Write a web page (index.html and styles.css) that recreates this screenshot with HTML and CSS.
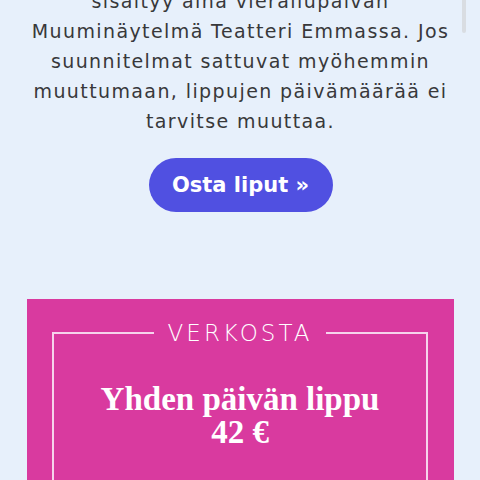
FILE: index.html
```html
<!DOCTYPE html>
<html lang="fi">
<head>
<meta charset="utf-8">
<title>Liput</title>
<link rel="stylesheet" href="styles.css">
</head>
<body>
<div class="scroll-thumb"></div>
<main class="page">
  <section class="intro">
    <p class="intro-text">sisältyy aina vierailupäivän<br>Muuminäytelmä Teatteri Emmassa. Jos<br>suunnitelmat sattuvat myöhemmin<br>muuttumaan, lippujen päivämäärää ei<br>tarvitse muuttaa.</p>
    <a class="buy-btn" href="#">Osta liput »</a>
  </section>
  <section class="ticket">
    <fieldset class="ticket-frame">
      <legend class="ticket-label">VERKOSTA</legend>
      <h2 class="ticket-title">Yhden päivän lippu<br>42 €</h2>
    </fieldset>
  </section>
</main>
</body>
</html>
```
FILE: styles.css
```css
html, body {
  margin: 0;
  padding: 0;
}
body {
  background: #e7f0fb;
  font-family: "DejaVu Sans", "Open Sans", sans-serif;
  color: #38383a;
  overflow: hidden;
  height: 480px;
}
.scroll-thumb {
  position: absolute;
  top: 0;
  left: 462px;
  width: 4px;
  height: 33px;
  border-radius: 0 0 3px 3px;
  background: #d9dde2;
}
.page {
  padding: 0 26px 0 27px;
}
.intro {
  display: flex;
  flex-direction: column;
  align-items: center;
}
.intro-text {
  margin: -14px -20px 0;
  font-size: 19px;
  line-height: 30px;
  letter-spacing: 1.4px;
  text-align: center;
}
.buy-btn {
  margin-top: 22px;
  display: flex;
  align-items: center;
  justify-content: center;
  width: 184px;
  height: 54px;
  border-radius: 27px;
  background: #5050e1;
  color: #ffffff;
  text-decoration: none;
  font-weight: bold;
  font-size: 21px;
}
.ticket {
  margin-top: 87px;
  background: #d93a9f;
  padding: 21px 26px 40px 25px;
}
.ticket-frame {
  margin: 0;
  border: 2px solid #f6d3ec;
  border-bottom: none;
  padding: 0 0 40px;
  text-align: center;
}
.ticket-label {
  margin: 0 auto;
  padding: 0 14px;
  font-size: 23px;
  font-weight: 300;
  letter-spacing: 3px;
  line-height: 26px;
  color: #ffffff;
}
.ticket-title {
  margin: 37px 0 0;
  font-family: "Liberation Serif", "DejaVu Serif", serif;
  font-weight: bold;
  font-size: 33px;
  line-height: 33px;
  color: #ffffff;
}
```
